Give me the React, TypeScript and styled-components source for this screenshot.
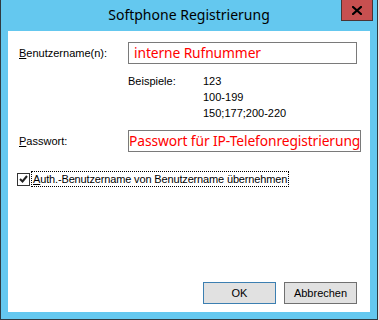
import React from "react";
import styled, { createGlobalStyle } from "styled-components";

const frame = "#64c8ef";
const dialogFont = `"Liberation Sans", Arial, sans-serif`;
const uiFont = `"Noto Sans", "Open Sans", sans-serif`;

const GlobalStyle = createGlobalStyle`
    html, body {
        margin: 0;
        padding: 0;
        background: #e6e6e6;
    }
`;

const Window = styled.div`
    width: 376px;
    height: 319px;
    display: flex;
    flex-direction: column;
    background: ${frame};
    border-left: 1px solid #2f3a40;
    border-right: 1px solid #2f3a40;
    border-bottom: 1px solid #2f3a40;
`;

const TitleBar = styled.div`
    height: 31px;
    display: grid;
    grid-template-columns: 1fr auto 1fr;
    align-items: start;
`;

const Title = styled.div`
    grid-column: 2;
    margin-top: 5px;
    font-family: ${uiFont};
    font-size: 14px;
    line-height: 20px;
    color: #000;
`;

const CloseButton = styled.div`
    grid-column: 3;
    justify-self: end;
    margin-right: 4px;
    width: 32px;
    height: 21px;
    box-sizing: border-box;
    background: #c75050;
    border: 1px solid #4a3434;
    border-top: none;
    display: flex;
    align-items: center;
    justify-content: center;
`;

const Client = styled.div`
    flex: 1;
    margin: 0 7px 7px 7px;
    background: #fff;
    display: flex;
    flex-direction: column;
    padding: 11px 13px 8px 11px;
    font-family: ${dialogFont};
    font-size: 11px;
    color: #000;
`;

const FieldRow = styled.div<{ $gap?: number }>`
    display: grid;
    grid-template-columns: 109px 1fr;
    align-items: center;
    margin-top: ${p => p.$gap ?? 0}px;
`;

const Label = styled.label`
    line-height: 14px;
`;

const Key = styled.span`
    text-decoration: underline;
`;

const Field = styled.div<{ $tight?: boolean }>`
    height: 22px;
    box-sizing: border-box;
    border: 1px solid #7a7a7a;
    padding-left: ${p => (p.$tight ? 0 : 5)}px;
    font-family: ${uiFont};
    font-size: 13.8px;
    letter-spacing: -0.1px;
    line-height: 19px;
    color: #ff0000;
    white-space: nowrap;
`;

const Examples = styled.div`
    display: grid;
    grid-template-columns: 75px 1fr;
    margin: 9px 0 0 109px;
    line-height: 16px;
`;

const ExampleValues = styled.div`
    display: flex;
    flex-direction: column;
`;

const CheckRow = styled.div`
    display: flex;
    align-items: center;
    margin: 20px 0 0 -2px;
`;

const Box = styled.div`
    width: 13px;
    height: 13px;
    box-sizing: border-box;
    border: 1px solid #333;
    background: #fff;
    display: flex;
    align-items: center;
    justify-content: center;
`;

const CheckLabel = styled.span`
    margin-left: 2px;
    padding: 0 1px;
    line-height: 14px;
    letter-spacing: -0.15px;
    outline: 1px dotted #000;
`;

const ButtonBar = styled.div`
    margin-top: auto;
    display: flex;
    justify-content: flex-end;
    gap: 8px;
`;

const Button = styled.button<{ $default?: boolean }>`
    width: 73px;
    height: 22px;
    margin: 0;
    padding: 0;
    background: #e1e1e1;
    border: 1px solid ${p => (p.$default ? "#3c7fb1" : "#707070")};
    font-family: ${dialogFont};
    font-size: 11px;
    color: #000;
`;

export default function App() {
    return (
        <>
            <GlobalStyle />
            <Window>
                <TitleBar>
                    <Title>Softphone Registrierung</Title>
                    <CloseButton>
                        <svg width="10" height="9" viewBox="0 0 10 9">
                            <path d="M1 1 L9 8 M9 1 L1 8" stroke="#000" strokeWidth="2.2" strokeLinecap="square" />
                        </svg>
                    </CloseButton>
                </TitleBar>
                <Client>
                    <FieldRow>
                        <Label><Key>B</Key>enutzername(n):</Label>
                        <Field>interne Rufnummer</Field>
                    </FieldRow>
                    <Examples>
                        <span>Beispiele:</span>
                        <ExampleValues>
                            <span>123</span>
                            <span>100-199</span>
                            <span>150;177;200-220</span>
                        </ExampleValues>
                    </Examples>
                    <FieldRow $gap={9}>
                        <Label><Key>P</Key>asswort:</Label>
                        <Field $tight>Passwort für IP-Telefonregistrierung</Field>
                    </FieldRow>
                    <CheckRow>
                        <Box>
                            <svg width="9" height="8" viewBox="0 0 9 8">
                                <path d="M1 4 L3.5 6.5 L8 1" fill="none" stroke="#222" strokeWidth="2" />
                            </svg>
                        </Box>
                        <CheckLabel><Key>A</Key>uth.-Benutzername von Benutzername übernehmen</CheckLabel>
                    </CheckRow>
                    <ButtonBar>
                        <Button $default>OK</Button>
                        <Button>Abbrechen</Button>
                    </ButtonBar>
                </Client>
            </Window>
        </>
    );
}
